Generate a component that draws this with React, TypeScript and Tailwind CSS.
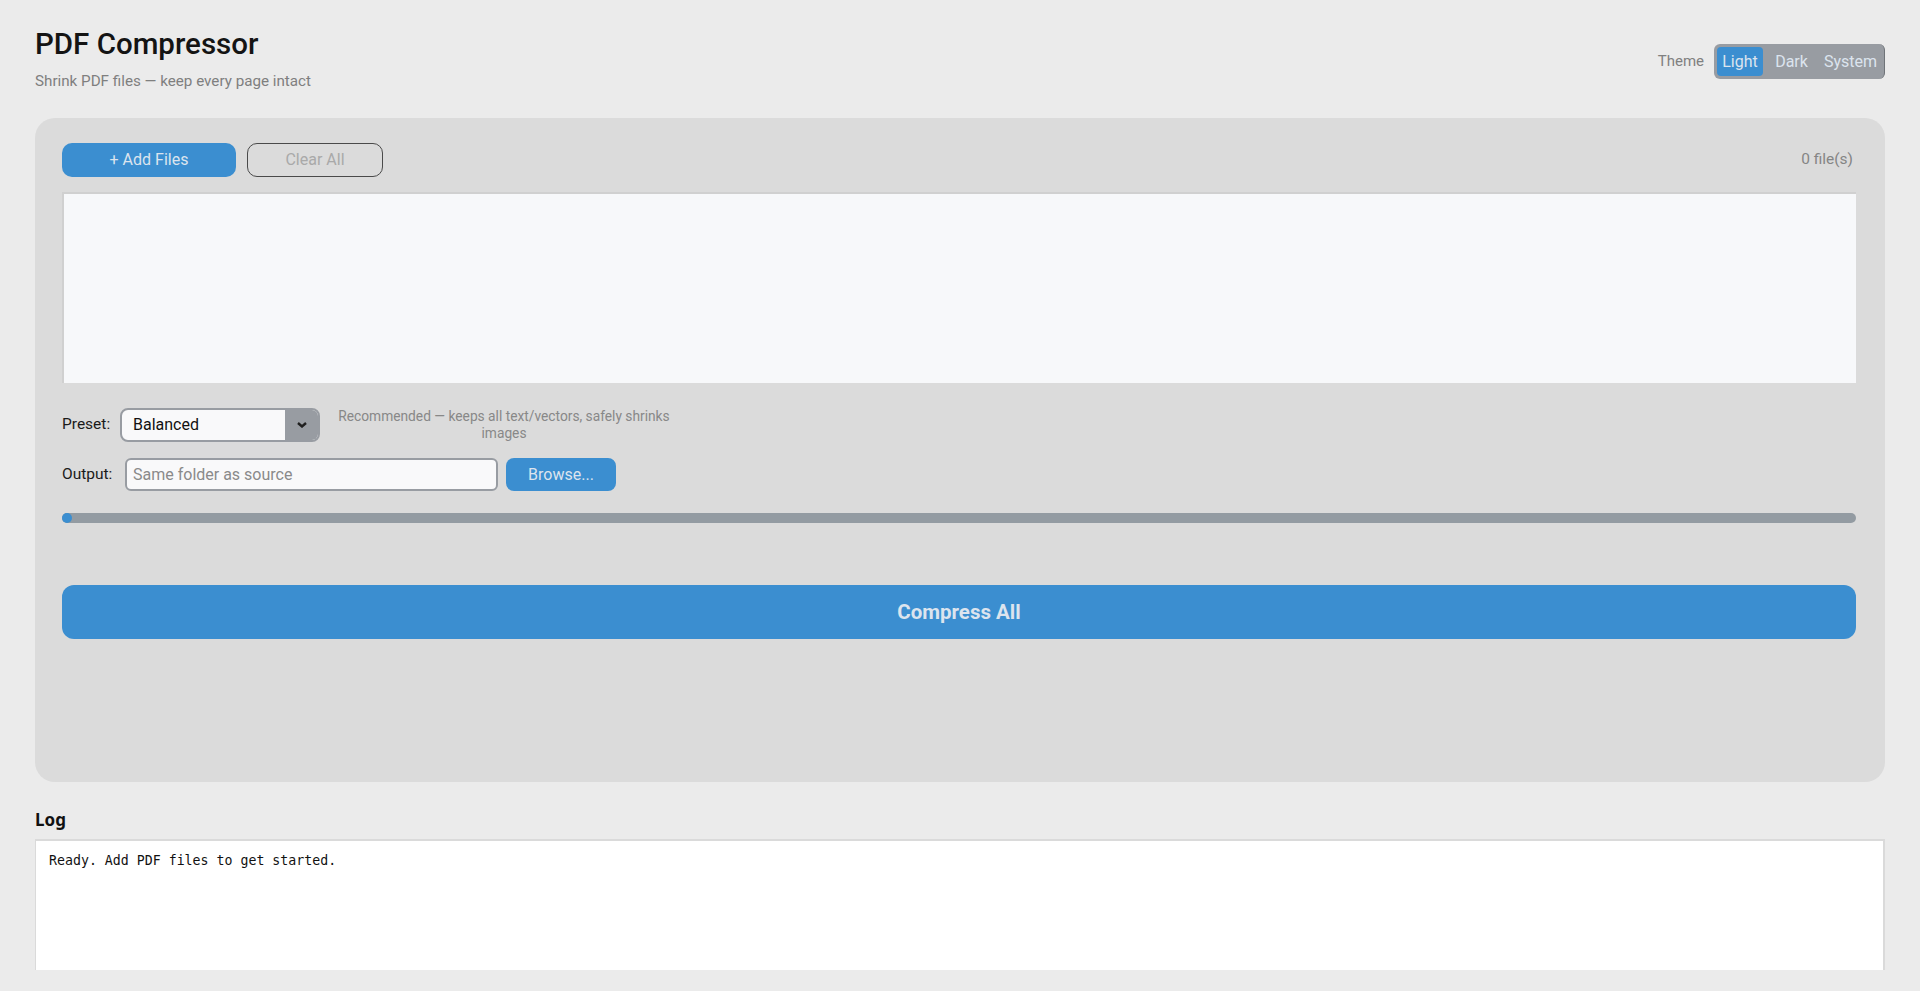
import React from "react";

const ui = { fontFamily: 'Roboto, "Liberation Sans", sans-serif' };

function ThemeSwitch() {
  return (
    <div className="flex items-center gap-[10px] mt-[14px]">
      <span className="text-[15px] text-[#808080]">Theme</span>
      <div className="flex h-[35px] items-center rounded-[6px] bg-[#989ca2] px-[3px] border-r border-r-[#6f7378]">
        <button className="h-[29px] w-[46px] rounded-[4px] bg-[#3b8ed0] text-[16px] text-[#dce4ee]">
          Light
        </button>
        <button className="h-[29px] w-[57px] text-[16px] text-[#dce4ee]">Dark</button>
        <button className="h-[29px] w-[61px] text-[16px] text-[#dce4ee]">System</button>
      </div>
    </div>
  );
}

function Chevron() {
  return (
    <svg width="10" height="6" viewBox="0 0 10 6">
      <path d="M1 1 L5 4.5 L9 1" stroke="#1f1f1f" strokeWidth="2.4" fill="none" />
    </svg>
  );
}

export default function App() {
  return (
    <div className="min-h-[991px] bg-[#ebebeb] px-[35px]" style={ui}>
      {/* header */}
      <div className="flex justify-between items-start pt-[30px]">
        <div>
          <h1 className="text-[29.5px] leading-[28px] font-medium text-[#141414]">PDF Compressor</h1>
          <p className="mt-[16px] text-[15.2px] leading-[15px] text-[#7f7f7f]">
            Shrink PDF files — keep every page intact
          </p>
        </div>
        <ThemeSwitch />
      </div>

      {/* main panel */}
      <div className="mt-[29px] h-[664px] rounded-[20px] bg-[#dbdbdb] pl-[27px] pr-[29px] pt-[25px]">
        <div className="flex items-center gap-[11px]">
          <button className="h-[34px] w-[174px] rounded-[10px] bg-[#3b8ed0] text-[16px] text-[#dce4ee]">
            + Add Files
          </button>
          <button className="h-[34px] w-[136px] rounded-[10px] border border-[#4a4a4a] text-[16px] text-[#a9a9a9]">
            Clear All
          </button>
          <span className="ml-auto mr-[3px] text-[15.5px] text-[#858585]">0 file(s)</span>
        </div>

        <div className="mt-[15px] h-[191px] border-t-2 border-l-2 border-[#d0d0d0] bg-[#f7f8fa]" />

        <div className="mt-[25px] flex items-center">
          <span className="text-[15.5px] text-[#1a1a1a] w-[58px]">Preset:</span>
          <div className="flex h-[34px] w-[200px] overflow-hidden rounded-[8px] border-2 border-[#989ca2] bg-[#f9f9fa]">
            <span className="flex-1 pl-[11px] text-[16px] leading-[30px] text-[#111]">Balanced</span>
            <span className="flex w-[33px] items-center justify-center bg-[#989ca2]">
              <Chevron />
            </span>
          </div>
          <p className="w-[350px] ml-[9px] text-center text-[13.75px] leading-[17px] text-[#888888]">
            Recommended — keeps all text/vectors, safely shrinks images
          </p>
        </div>

        <div className="mt-[16px] flex items-center">
          <span className="text-[15.5px] text-[#1a1a1a] w-[63px]">Output:</span>
          <input
            placeholder="Same folder as source"
            className="h-[33px] w-[373px] rounded-[6px] border-2 border-[#989ca2] bg-[#f9f9fa] px-[6px] text-[16px] placeholder:text-[#8a8a8a] outline-none"
          />
          <button className="ml-[8px] h-[33px] w-[110px] rounded-[8px] bg-[#3b8ed0] text-[16px] text-[#dce4ee]">
            Browse...
          </button>
        </div>

        <div className="mt-[22px] h-[10px] rounded-full bg-[#939ba2]">
          <div className="h-[10px] w-[10px] rounded-full bg-[#3b8ed0]" />
        </div>

        <button className="mt-[62px] h-[54px] w-full rounded-[12px] bg-[#3b8ed0] text-[20.5px] font-bold text-[#dce4ee]">
          Compress All
        </button>
      </div>

      {/* log */}
      <h2
        className="mt-[26px] text-[17px] leading-[24px] font-bold text-[#111]"
        style={{ fontFamily: '"Noto Sans", sans-serif' }}
      >
        Log
      </h2>
      <div className="mt-[7px] h-[131px] border-t-2 border-l border-r-2 border-[#dadada] bg-white pl-[13px] pr-[11px] pt-[11px]">
        <pre className="text-[13.25px] leading-[17px] text-[#111]" style={{ fontFamily: '"DejaVu Sans Mono", monospace' }}>
          Ready. Add PDF files to get started.
        </pre>
      </div>
    </div>
  );
}
